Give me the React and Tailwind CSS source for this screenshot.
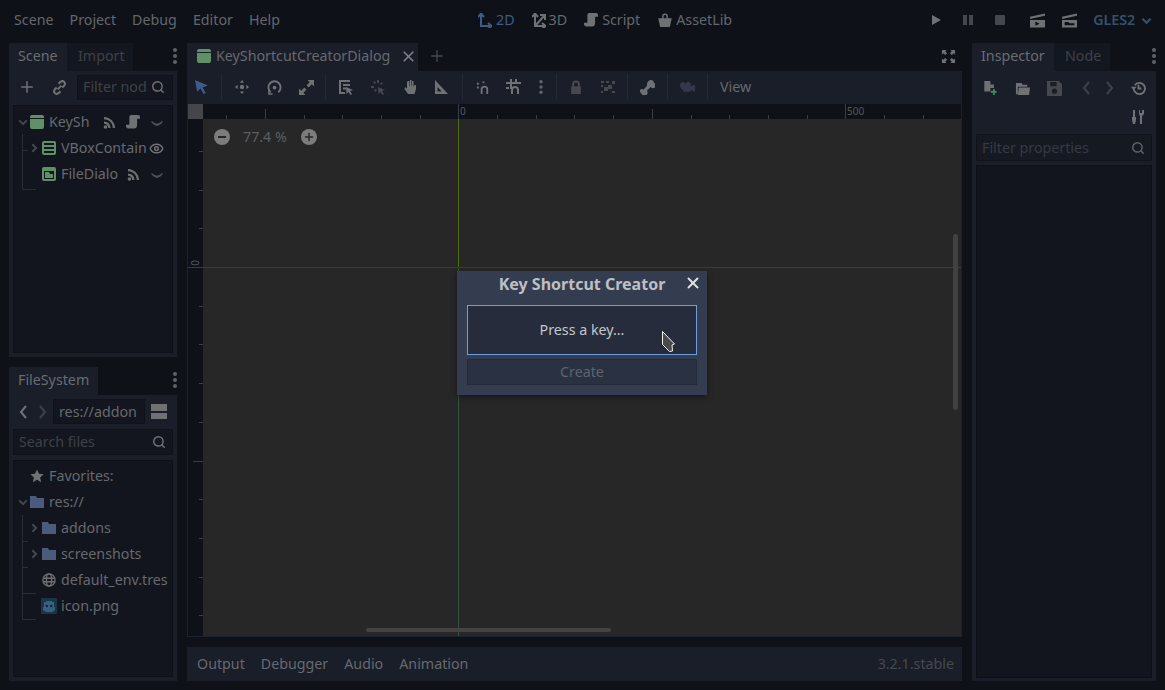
import React from "react";
import { Plus, Search, X, Eye } from "lucide-react";

const Svg = ({ className = "", children, size = 14, vb = "0 0 16 16" }) => (
  <svg width={size} height={size} viewBox={vb} className={"shrink-0 " + className} fill="currentColor">{children}</svg>
);

const NodeIco = ({ className = "text-[#5f9068]" }) => (
  <Svg vb="1 1 14 14" className={className}><path d="M3 1h10a2 2 0 0 1 2 2v1H1V3a2 2 0 0 1 2-2zM1 5h14v8a2 2 0 0 1-2 2H3a2 2 0 0 1-2-2z" /></Svg>
);
const VBox = () => (
  <Svg vb="1 1 14 14" className="text-[#5f9068]"><path d="M3 1h10a2 2 0 0 1 2 2v10a2 2 0 0 1-2 2H3a2 2 0 0 1-2-2V3a2 2 0 0 1 2-2zm0 2v2h10V3zm0 4v2h10V7zm0 4v2h10v-2z" fillRule="evenodd" /></Svg>
);
const FileDlg = () => (
  <Svg vb="1 1 14 14" className="text-[#5f9068]"><path d="M3 1h10a2 2 0 0 1 2 2v10a2 2 0 0 1-2 2H3a2 2 0 0 1-2-2V3a2 2 0 0 1 2-2zm0 4v8h10V5zm1 1h4l1 2h3v4H4z" fillRule="evenodd" /></Svg>
);
const Rss = ({ className = "text-[#6f7175]" }) => (
  <Svg size={13} vb="2 1 13 13" className={className}><path d="M3 2c6 0 11 5 11 11h-2.200c0-5-3.800-8.800-8.800-8.800zM3 6.500c3.700 0 6.500 2.800 6.500 6.500H7.300c0-2.500-1.800-4.300-4.300-4.300z" /><circle cx="4.500" cy="12" r="1.800" /></Svg>
);
const ScriptIco = ({ className = "text-[#6f7175]" }) => (
  <Svg vb="0.500 1 14.500 14.500" className={className}><path d="M6 1h7c1.500 0 2 1 2 2.500V5h-3v6c0 2.500-1 4-3 4H3c-1.500 0-2.500-1-2.500-2.500V11H4V3c0-1 .8-2 2-2z" /></Svg>
);
const Smile = () => (
  <Svg className="text-[#4c4f56]"><path d="M2 6.500c1.500 1.800 4 3 6 3.500 2-.5 4.500-1.700 6-3.500l.5 1.500C13 10.500 10 12 8 12.500 6 12 3 10.500 1.500 8z" /></Svg>
);
const ChevDown = ({ className = "text-[#45474e]", size = 10 }) => (
  <svg width={size} height={size} viewBox="0 0 12 12" className={"shrink-0 " + className} fill="none" stroke="currentColor" strokeWidth="2.400"><path d="M1.500 4l4.500 4.500L10.500 4" /></svg>
);
const ChevRight = ({ className = "text-[#45474e]" }) => (
  <svg width="10" height="10" viewBox="0 0 12 12" className={"shrink-0 " + className} fill="none" stroke="currentColor" strokeWidth="2.400"><path d="M4 1.500L8.500 6 4 10.500" /></svg>
);
const Folder = () => (
  <Svg vb="1 1 14 14" className="text-[#4a5b7e]"><path d="M1 2h6l1 2h7v10H1z" /></Svg>
);
const Dots = () => (
  <svg width="4" height="16" viewBox="0 0 4 16" className="text-[#5f6268] shrink-0" fill="currentColor"><circle cx="2" cy="2" r="2" /><circle cx="2" cy="8" r="2" /><circle cx="2" cy="14" r="2" /></svg>
);
const NavL = ({ className }) => (
  <svg width="8" height="14" viewBox="0 0 8 14" className={"shrink-0 " + className} fill="none" stroke="currentColor" strokeWidth="2"><path d="M7 1L2 7l5 6" /></svg>
);
const NavR = ({ className }) => (
  <svg width="8" height="14" viewBox="0 0 8 14" className={"shrink-0 " + className} fill="none" stroke="currentColor" strokeWidth="2"><path d="M1 1l5 6-5 6" /></svg>
);
const LinkIco = () => (
  <svg width="15" height="15" viewBox="0 0 16 16" className="shrink-0 text-[#6f7175]" fill="none" stroke="currentColor" strokeWidth="2.200"><path d="M7 4l2-2c1.500-1 3-1 4 0s1 2.500 0 4l-2 2M9 12l-2 2c-1.500 1-3 1-4 0s-1-2.500 0-4l2-2M6 10l4-4" /></svg>
);

const Menu = ({ children }) => <span>{children}</span>;

const DockTab = ({ active, children, className = "" }) => (
  <div className={"h-7 flex items-center px-[9px] pb-[2px] " + (active ? "bg-[#191e29] text-[#696c73] " : "bg-[#13171f] text-[#3e4149] ") + className}>{children}</div>
);

const Row = ({ indent, children, label, right }) => (
  <div className="h-[26px] flex items-center relative">
    <div className="shrink-0 flex items-center" style={{ width: indent }}>{children}</div>
    <span className="ml-1 flex-1 min-w-0 overflow-hidden whitespace-nowrap text-[#66696f]">{label}</span>
    {right}
  </div>
);

const Sep = () => <div className="w-px h-[26px] bg-[#232834] shrink-0" />;

const Tool = ({ children, w = 32 }) => <div className="flex items-center justify-center shrink-0" style={{ width: w }}>{children}</div>;

const ico = "text-[#6f7175]";
const dim = "text-[#46484e]";

const hTicks = [];
for (let i = -6; i <= 13; i++) hTicks.push(i);

const Ruler = () => (
  <svg width="758" height="15" className="block shrink-0 text-[#3a3d43]" stroke="currentColor">
    {hTicks.map((i) => {
      const x = Math.round(255.3 + i * 38.7) + 0.5;
      const y1 = i % 10 === 0 ? 0 : i % 5 === 0 ? 5 : 11;
      return <line key={i} x1={x} x2={x} y1={y1} y2={15} />;
    })}
  </svg>
);

const VRuler = () => {
  const t = [];
  for (let i = -4; i <= 10; i++) t.push(i);
  return (
    <svg width="15" height="517" className="block text-[#3a3d43]" stroke="currentColor">
      {t.map((i) => {
        const y = Math.round(148 + i * 38.7) + 0.5;
        const x1 = i % 10 === 0 ? 0 : i % 5 === 0 ? 5 : 11;
        return <line key={i} y1={y} y2={y} x1={x1} x2={15} />;
      })}
    </svg>
  );
};

export default function App() {
  return (
    <div className="w-[1165px] h-[690px] overflow-hidden bg-[#0e1118] text-[14.25px] leading-[20px] font-['Noto_Sans',sans-serif] text-[#696c73] flex flex-col relative">
      {/* top bar */}
      <div className="h-[43px] shrink-0 flex items-center pb-[3px] text-[#64676e]">
        <div className="flex gap-4 pl-[14px] w-[478px]">
          <Menu>Scene</Menu><Menu>Project</Menu><Menu>Debug</Menu><Menu>Editor</Menu><Menu>Help</Menu>
        </div>
        <div className="flex items-center gap-1 text-[#3f5c88]">
          <svg width="14" height="15" viewBox="0 0 14 15" className="shrink-0" fill="none" stroke="currentColor" strokeWidth="2"><path d="M3 2v11h9" /><path d="M0 4l3-3.500L6 4M10 10l3.500 3-3.500 3" /></svg>
          <span>2D</span>
        </div>
        <div className="flex items-center gap-[3px] ml-[17px]">
          <svg width="14" height="15" viewBox="0 0 14 15" className={"shrink-0 " + ico} fill="none" stroke="currentColor" strokeWidth="2"><path d="M3 2v11h9M3 13L12 3" /><path d="M0 4l3-3.500L6 4M10 10l3.500 3-3.500 3M8 2h5v5" /></svg>
          <span>3D</span>
        </div>
        <div className="flex items-center gap-1 ml-[17px]"><ScriptIco /><span>Script</span></div>
        <div className="flex items-center gap-1 ml-[18px]">
          <Svg vb="1 0.500 14 14.500" className={ico}><path d="M5 6V4a3 3 0 0 1 6 0v2h-1.500V4a1.500 1.500 0 0 0-3 0v2zM1 6h14l-2 9H3z" /></Svg><span>AssetLib</span>
        </div>
        <div className="ml-[196px] flex items-center text-[#6f7175]">
          <Tool w={16}><Svg size={12} vb="0 0 12 12"><path d="M2 1l9 5-9 5z" /></Svg></Tool>
          <div className="w-4" />
          <Tool w={16}><Svg size={12} vb="0 0 12 12" className="text-[#46484e]"><path d="M1 1h4v10H1zM7 1h4v10H7z" /></Svg></Tool>
          <div className="w-4" />
          <Tool w={16}><Svg size={12} vb="0 0 12 12" className="text-[#46484e]"><path d="M2 1h8a1 1 0 0 1 1 1v8a1 1 0 0 1-1 1H2a1 1 0 0 1-1-1V2a1 1 0 0 1 1-1z" /></Svg></Tool>
          <div className="w-[22px]" />
          <Svg size={15} vb="1 1.500 14 14" className={ico}><path d="M1 5l14-3v2L1 7zM1 8h14v7H1zm5 1.500v4l4-2z" fillRule="evenodd" /></Svg>
          <div className="w-[17px]" />
          <Svg size={15} vb="1 1.500 14 14" className={ico}><path d="M1 5l14-3v2L1 7zM1 8h14v7H1zm2.500 2v3h9v-2H8l-1-1z" fillRule="evenodd" /></Svg>
          <span className="ml-[16px] font-semibold text-[#33516a]">GLES2</span>
          <ChevDown size={11} className="ml-[6px] text-[#33516a]" />
        </div>
      </div>

      <div className="flex-1 min-h-0 flex pl-[9px] pb-[9px] gap-[10px]">
        {/* left column */}
        <div className="w-[168px] shrink-0 flex flex-col gap-[10px]">
          <div className="h-[314px] flex flex-col">
            <div className="flex items-center">
              <DockTab active className="w-[58px]">Scene</DockTab>
              <DockTab className="w-[66px] pl-[11px]">Import</DockTab>
              <div className="ml-auto pb-[2px]"><Dots /></div>
            </div>
            <div className="flex-1 bg-[#191e29] p-1 flex flex-col gap-[5px]">
              <div className="h-[25px] flex items-center">
                <div className="w-[64px] shrink-0 flex items-center pl-[5px] gap-[16px] pb-[1px]">
                  <Plus size={18} strokeWidth={2} className="text-[#6f7175] shrink-0" />
                  <LinkIco />
                </div>
                <div className="flex-1 h-[25px] bg-[#13161e] border border-[#0f1219] flex items-center pl-[5px] pr-[6px] pb-[1px] text-[#3e4149] overflow-hidden">
                  <span className="flex-1 overflow-hidden whitespace-nowrap">Filter nod</span>
                  <Search size={14} strokeWidth={2.5} className="text-[#6f7175] shrink-0 mr-[1px]" />
                </div>
              </div>
              <div className="flex-1 bg-[#12151d] border border-[#0d1016] pt-[3px] pr-[8px] relative">
                <svg width="30" height="70" className="absolute left-[8px] top-[28px] text-[#2a2d34]" stroke="currentColor" fill="none"><path d="M.5 0v55.500H14M.5 16.500H6" /></svg>
                <Row indent={31} label="KeySh" right={<div className="flex items-center gap-[10px]"><Rss /><ScriptIco /><Smile /></div>}>
                  <div className="ml-[4px]"><ChevDown /></div><div className="ml-[2px]"><NodeIco /></div>
                </Row>
                <Row indent={43} label="VBoxContain" right={<Eye size={15} strokeWidth={2.4} className="text-[#6f7175] shrink-0 ml-[3px]" />}>
                  <div className="ml-[15px]"><ChevRight /></div><div className="ml-[3px]"><VBox /></div>
                </Row>
                <Row indent={43} label="FileDialo" right={<div className="flex items-center gap-[10px]"><Rss /><Smile /></div>}>
                  <div className="ml-[28px]"><FileDlg /></div>
                </Row>
              </div>
            </div>
          </div>

          <div className="flex-1 flex flex-col min-h-0">
            <div className="flex items-center">
              <DockTab active className="w-[89px]">FileSystem</DockTab>
              <div className="ml-auto pb-[2px]"><Dots /></div>
            </div>
            <div className="flex-1 bg-[#191e29] p-1 flex flex-col gap-[5px]">
              <div className="h-[25px] flex items-center">
                <div className="w-[40px] shrink-0 flex items-center pl-[6px] gap-3">
                  <NavL className="text-[#6f7175]" />
                  <NavR className="text-[#3e4149]" />
                </div>
                <div className="w-[92px] h-[25px] shrink-0 bg-[#13161e] border border-[#0f1219] flex items-center pl-[5px] overflow-hidden whitespace-nowrap text-[#66696f]">res://addon</div>
                <div className="ml-[6px] flex flex-col gap-[2px]"><div className="w-4 h-[7px] bg-[#6f7175]" /><div className="w-4 h-[6px] bg-[#6f7175]" /></div>
              </div>
              <div className="h-[26px] bg-[#13161e] border border-[#0f1219] flex items-center pl-[5px] pr-[6px] text-[#3e4149]">
                <span className="flex-1">Search files</span>
                <Search size={14} strokeWidth={2.5} className="text-[#6f7175] shrink-0" />
              </div>
              <div className="flex-1 bg-[#12151d] border border-[#0d1016] pt-[2px] relative">
                <svg width="30" height="120" className="absolute left-[8px] top-[54px] text-[#2a2d34]" stroke="currentColor" fill="none"><path d="M.5 0v104.500H14M.5 78.500H14M.5 52.500H6M.5 26.500H6" /></svg>
                <Row indent={31} label="Favorites:">
                  <div className="ml-[16px]"><Svg className={ico}><path d="M8 .5l2.300 5 5.200.6-3.900 3.600 1.100 5.300L8 12.300 3.300 15l1.100-5.300L.5 6.100l5.200-.6z" /></Svg></div>
                </Row>
                <Row indent={31} label="res://">
                  <div className="ml-[4px]"><ChevDown /></div><div className="ml-[2px]"><Folder /></div>
                </Row>
                <Row indent={43} label="addons">
                  <div className="ml-[15px]"><ChevRight /></div><div className="ml-[3px]"><Folder /></div>
                </Row>
                <Row indent={43} label="screenshots">
                  <div className="ml-[15px]"><ChevRight /></div><div className="ml-[3px]"><Folder /></div>
                </Row>
                <Row indent={43} label="default_env.tres">
                  <div className="ml-[28px]">
                    <svg width="14" height="14" viewBox="0 0 16 16" className={"shrink-0 " + ico} fill="none" stroke="currentColor" strokeWidth="1.500"><circle cx="8" cy="8" r="7" /><ellipse cx="8" cy="8" rx="3" ry="7" /><path d="M1.500 6h13M1.500 10h13" /></svg>
                  </div>
                </Row>
                <Row indent={43} label="icon.png">
                  <div className="ml-[27px]">
                    <svg width="16" height="16" viewBox="0 0 16 16" className="shrink-0"><rect width="16" height="16" rx="1" fill="#1d3446" /><path d="M3 4h2V3h6v1h2v5h1v3l-3 2H5l-3-2V9h1z" fill="#35607f" /><circle cx="5.800" cy="8" r="1.200" fill="#13222f" /><circle cx="10.200" cy="8" r="1.200" fill="#13222f" /></svg>
                  </div>
                </Row>
              </div>
            </div>
          </div>
        </div>

        {/* center */}
        <div className="w-[775px] shrink-0 flex flex-col gap-[10px]">
          <div className="h-[594px] flex flex-col">
            <div className="h-7 flex items-center">
              <div className="w-[231px] h-7 bg-[#191e29] flex items-center pl-[10px] pb-[2px] gap-[5px] text-[#66696f]">
                <NodeIco />
                <span className="whitespace-nowrap">KeyShortcutCreatorDialog</span>
                <X size={17} strokeWidth={2.4} className="ml-[5px] text-[#7c7e82] shrink-0" />
              </div>
              <Plus size={18} strokeWidth={1.8} className="ml-[10px] mb-[3px] text-[#46484e] shrink-0" />
              <div className="ml-auto mr-[6px] mb-[2px]">
                <Svg size={15} className={ico}><path d="M1 1h5L4.500 2.500 6.500 4.500 4.500 6.500 2.500 4.500 1 6zM15 1v5l-1.500-1.500-2 2-2-2 2-2L10 1zM1 15v-5l1.500 1.500 2-2 2 2-2 2L6 15zM15 15h-5l1.500-1.500-2-2 2-2 2 2L15 10z" /></Svg>
              </div>
            </div>
            <div className="h-[33px] bg-[#191e29] flex items-center text-[#66696f] shrink-0 pb-[1px]">
              <Tool w={30}><Svg vb="2 1 13 13" className="text-[#3f5c88]"><path d="M2 1l12 5-5 2 3 5-2 1-3-5-3 3z" /></Svg></Tool>
              <div className="w-1" />
              <Sep />
              <div className="w-1" />
              <Tool><Svg className={ico}><path d="M8 0l2.500 3h-5zM8 16l-2.500-3h5zM0 8l3-2.500v5zM16 8l-3 2.500v-5z" /><circle cx="8" cy="8" r="2.500" /></Svg></Tool>
              <Tool><svg width="15" height="15" viewBox="0 0 16 16" className={"shrink-0 " + ico} fill="none" stroke="currentColor" strokeWidth="2"><path d="M4 13A6.500 6.500 0 1 1 12 13" /><circle cx="8" cy="8" r="1" fill="currentColor" /><path d="M2 11v4h4" strokeWidth="1.500" /></svg></Tool>
              <Tool><Svg size={15} vb="1 1 14 14" className={ico}><path d="M9 1h6v6l-2-2-3 3-2-2 3-3zM7 15H1V9l2 2 3-3 2 2-3 3z" /></Svg></Tool>
              <div className="w-[3px]" />
              <Sep />
              <div className="w-1" />
              <Tool><Svg size={16} className={ico}><path d="M1 1h11v2H3v10h4v2H1zM5 5h7v2H5zM5 8.500h3v2H5zM8 8l7 3-3 1 2 3-1.500 1-2-3-2 2z" /></Svg></Tool>
              <Tool><Svg size={16} className={dim}><path d="M7 1h2v3H7zM1 7h3v2H1zM3 3l2-1 1 2-1 1zM12 3l1 1-2 2-1-1zM8 8l7 3-3 1 2 3-1.500 1-2-3-2 2zM4 11l2-1 1 1-2 2z" /></Svg></Tool>
              <Tool><Svg size={15} vb="2 1 13 15" className={ico}><path d="M6 2h1.500v5H8V1h1.500v6h.5V2h1.500v6l1-2H14v4l-1.500 5H6L2.500 10 3 8l2 1.500V3z" /></Svg></Tool>
              <Tool><Svg vb="2 1 14 14" className={ico}><path d="M2 1l13 14H2zm2.500 7v4.500h4.200z" fillRule="evenodd" /></Svg></Tool>
              <div className="w-1" />
              <Sep />
              <div className="w-1" />
              <Tool><svg width="15" height="15" viewBox="0 0 16 16" className={"shrink-0 " + ico} fill="none" stroke="currentColor" strokeWidth="2"><path d="M1 4h2M1 8h2M7 2.500h2M6 15v-5a3 3 0 0 1 6 0v5" /></svg></Tool>
              <Tool w={30}><svg width="16" height="16" viewBox="0 0 16 16" className={"shrink-0 " + ico} fill="none" stroke="currentColor" strokeWidth="2"><path d="M5 0v10M10 0v4M0 4h15M0 9h3M6 15v-4a3 3 0 0 1 6 0v4" /></svg></Tool>
              <Tool w={24}><svg width="4" height="14" viewBox="0 0 4 16" className="text-[#5f6268] shrink-0" fill="currentColor"><circle cx="2" cy="2" r="2" /><circle cx="2" cy="8" r="2" /><circle cx="2" cy="14" r="2" /></svg></Tool>
              <div className="w-[3px]" />
              <Sep />
              <div className="w-[3px]" />
              <Tool><Svg vb="1 0.500 14 14.500" className={dim}><path d="M4 7V5a4 4 0 0 1 8 0v2h1v8H3V7zm2 0h4V5a2 2 0 0 0-4 0z" fillRule="evenodd" /></Svg></Tool>
              <Tool><Svg vb="1 1.500 14 13" className={dim}><path d="M1 2h3v2H1zM6 2h3v2H6zM12 2h3v3h-3zM8 6h4v4H8zM4 8h4v4H4zM1 12h2v2H1zM12 12h3v2h-3zM1 6h2v2H1z" /></Svg></Tool>
              <div className="w-[3px]" />
              <Sep />
              <Tool w={39}><Svg size={15} vb="1 1 14 14" className={ico}><path d="M11 1a3 3 0 0 1 3 3 2 2 0 0 1 1 4 3 3 0 0 1-4-.5L7.500 11a3 3 0 0 1-.5 4 2 2 0 0 1-4-1 3 3 0 0 1-2-3c0-1.500 2-2 3-1l3.500-3.500C7 4 9 1 11 1z" /></Svg></Tool>
              <Sep />
              <Tool w={39}><Svg size={15} vb="1 1 14 14" className="text-[#333948]"><path d="M1 6c0-2 1.500-3.500 3.500-3 1 .2 1.500 1 2 1.500C7 3 8.500 2 10 3c1 .5 1.500 2 1 3v1l4-2v7l-4-2v2H4v-2C2 10 1 8 1 6z" /></Svg></Tool>
              <Sep />
              <span className="ml-3">View</span>
            </div>
            <div className="flex-1 min-h-0 flex flex-col border border-[#1c212c] border-t-0 border-r-[#1c212c] relative">
              <div className="flex h-[15px] shrink-0 bg-[#0e1118]">
                <div className="w-[15px] h-[15px] bg-[#44464b] shrink-0" />
                <Ruler />
              </div>
              <div className="flex-1 min-h-0 flex">
                <div className="w-[15px] shrink-0 bg-[#0e1118]"><VRuler /></div>
                <div className="flex-1 bg-[#272727] relative text-[#5c5e62] overflow-hidden">
                  <div className="flex items-center h-6 mt-[6px] ml-[11px]">
                    <div className="w-4 h-4 rounded-full bg-[#7c7c7c] flex items-center justify-center"><div className="w-2 h-[2px] bg-[#272727]" /></div>
                    <span className="ml-[13px] w-[56px]">77.4 %</span>
                    <div className="ml-[2px] w-4 h-4 rounded-full bg-[#7c7c7c] flex items-center justify-center"><Plus size={12} strokeWidth={3} className="text-[#272727]" /></div>
                  </div>
                  {/* guides */}
                  <div className="absolute left-0 w-[255px] top-[148px] h-px bg-[#5a2c34]" />
                  <div className="absolute left-[256px] right-0 top-[148px] h-px bg-[#4f2f4a]" />
                  <div className="absolute top-0 h-[148px] left-[255px] w-px bg-[#4f6b10]" />
                  <div className="absolute top-[149px] bottom-0 left-[255px] w-px bg-[#35533a]" />
                  <div className="absolute top-[115px] left-[750px] w-[5px] h-[176px] rounded-full bg-[#414141]" />
                  <div className="absolute top-[509px] left-[163px] w-[245px] h-[4px] rounded-full bg-[#434343]" />
                </div>
              </div>
              <span className="absolute left-[272px] top-[-3px] text-[10px] text-[#55575c]">0</span>
              <span className="absolute left-[659px] top-[-3px] text-[10px] text-[#55575c]">500</span>
              <span className="absolute left-[4px] top-[154px] text-[10px] leading-[10px] text-[#55575c] -rotate-90">0</span>
            </div>
          </div>
          <div className="h-[34px] bg-[#191e29] flex items-center pl-[10px] pr-2 gap-4 text-[#66696f]">
            <span>Output</span><span>Debugger</span><span>Audio</span><span>Animation</span>
            <span className="ml-auto text-[#45484f]">3.2.1.stable</span>
          </div>
        </div>

        {/* right */}
        <div className="w-[184px] shrink-0 flex flex-col">
          <div className="flex items-center">
            <DockTab active className="w-[82px]">Inspector</DockTab>
            <DockTab className="w-[56px] pl-[11px]">Node</DockTab>
            <div className="ml-auto pb-[2px]"><Dots /></div>
          </div>
          <div className="flex-1 bg-[#191e29] p-1 flex flex-col">
            <div className="h-[26px] flex items-center shrink-0">
              <Tool w={28}><Svg vb="1 0 15 16" className={ico}><path d="M2 0h7l4 4v4H9v4H2zM9 0v4h4z" /><path d="M12 9h2v2.500h2v2h-2V16h-2v-2.500H9.500v-2H12z" fill="#3f8f5a" /></Svg></Tool>
              <div className="w-1" />
              <Tool w={28}><svg width="15" height="15" viewBox="0 0 16 16" className={"shrink-0 " + ico} fill="currentColor"><path d="M1 2h6l1 2h5v2H3v8H1z" /><path d="M4 7h12l-1 8H3z" /></svg></Tool>
              <div className="w-1" />
              <Tool w={28}><Svg size={15} vb="1 1 14 14" className="text-[#46484e]"><path d="M1 1h11l3 3v11H1zm3 1v4h6V2zm4 6a2.500 2.500 0 1 0 0 5 2.500 2.500 0 0 0 0-5z" fillRule="evenodd" /></Svg></Tool>
              <Tool w={36}><NavL className="text-[#3e4149]" /></Tool>
              <Tool w={12}><NavR className="text-[#3e4149]" /></Tool>
              <div className="w-[10px]" />
              <Tool w={24}><svg width="15" height="15" viewBox="0 0 16 16" className={"shrink-0 " + ico} fill="none" stroke="currentColor" strokeWidth="2"><path d="M3 9a6 6 0 1 0 1-4.500M8 4v4h3" /><path d="M0 6h6L4 8.500 3 10z" fill="currentColor" stroke="none" /></svg></Tool>
            </div>
            <div className="h-[26px] mt-[3px] flex items-center justify-end pr-[7px] shrink-0">
              <Svg vb="2 1 12 14" className={ico}><path d="M3 1h2v7h1v3l-1 4H3l-1-4V8h1zM9 1h1v3h2V1h2v4l-2 2v8h-2V7L9 5z" /></Svg>
            </div>
            <div className="h-[27px] mt-1 bg-[#151922] border border-[#10131a] flex items-center pl-[5px] pr-[6px] text-[#373a42] shrink-0">
              <span className="flex-1">Filter properties</span>
              <Search size={14} strokeWidth={2.5} className="text-[#5f6268] shrink-0" />
            </div>
            <div className="flex-1 mt-1 bg-[#12151d] border border-[#0d1016] mb-[-1px]" />
          </div>
        </div>
      </div>

      {/* floating dialog */}
      <div className="absolute left-[457px] top-[271px] w-[250px] h-[124px] bg-[#343d50] shadow-[0_2px_6px_rgba(0,0,0,0.45)] px-[10px] text-[#c4c6ca]">
        <div className="h-[26px] flex items-center justify-center font-bold text-[16px] text-[#bdbfc5] relative">
          Key Shortcut Creator
          <X size={18} strokeWidth={2.6} className="absolute right-[-5px] top-[3px] text-[#dfe0e2]" />
        </div>
        <div className="mt-[8px] h-[50px] bg-[#262c3c] border border-[#6d9fe0] flex items-center justify-center">Press a key...</div>
        <div className="mt-1 h-[26px] bg-[#2a3142] border border-[#232a39] flex items-center justify-center text-[#5e636f]">Create</div>
      </div>
      <svg width="16" height="24" viewBox="0 0 16 24" className="absolute left-[661px] top-[330px]"><path d="M1.500 1.500l12 12.500-2.500 1 .5 6-3 .5-7-7z" fill="#4a4a4a" stroke="#f2f2f2" strokeWidth="1" /></svg>
    </div>
  );
}
